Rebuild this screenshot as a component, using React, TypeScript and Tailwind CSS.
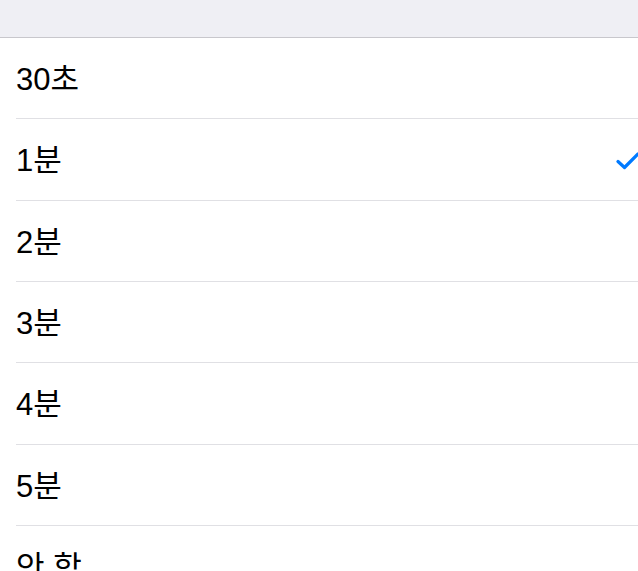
const OPTIONS = ['30초', '1분', '2분', '3분', '4분', '5분', '안 함'];

const Check = () => (
  <svg width="24" height="18" viewBox="0 0 24 18" fill="none">
    <path
      d="M2 9.5 L8.5 15.5 L22 2"
      stroke="#007aff"
      strokeWidth="3.2"
      strokeLinecap="round"
      strokeLinejoin="round"
    />
  </svg>
);

export default function App() {
  const selected = '1분';
  return (
    <div className="min-h-screen bg-[#efeff4] font-['Liberation_Sans','Noto_Sans_CJK_KR',sans-serif]">
      <div className="h-[37px]" />
      <ul className="border-t border-[#c8c7cc] bg-white">
        {OPTIONS.map((label) => (
          <li key={label} className="pl-4">
            <div className="flex h-[81.33px] items-center justify-between border-b border-[#e0e0e4]">
              <span className="pt-[3px] text-[31px] leading-none text-black">{label}</span>
              {label === selected && (
                <span className="mr-[-2px] mt-[3px] flex">
                  <Check />
                </span>
              )}
            </div>
          </li>
        ))}
      </ul>
    </div>
  );
}
